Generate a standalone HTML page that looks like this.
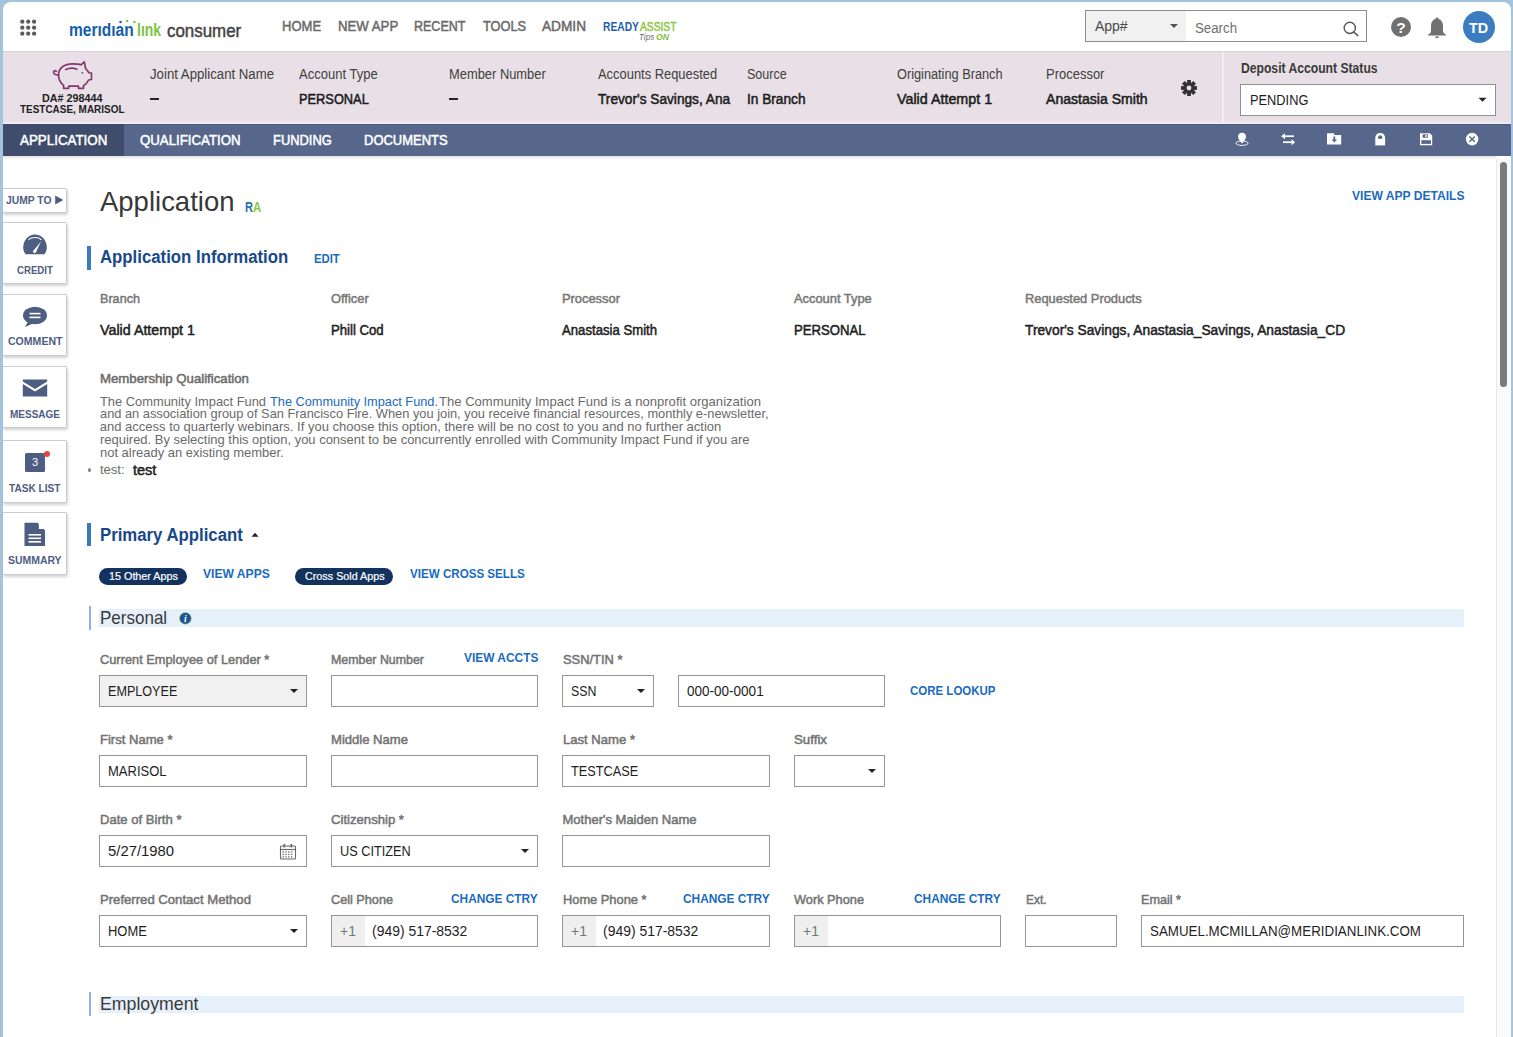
<!DOCTYPE html>
<html><head><meta charset="utf-8"><title>MeridianLink Consumer</title>
<style>
html,body{margin:0;padding:0;}
body{width:1513px;height:1037px;overflow:hidden;position:relative;background:#a3c4dc;font-family:"Liberation Sans",sans-serif;}
.t{position:absolute;line-height:1;white-space:nowrap;transform-origin:0 0;}
.b{position:absolute;}
</style></head><body>
<div class="b" style="left:3px;top:2px;width:1508px;height:1040px;background:#fff;border-radius:8px 8px 0 0;"></div>
<div class="b" style="left:3px;top:51px;width:1508px;height:1px;background:#d9d3d7;"></div>
<svg class="b" style="left:0px;top:0px;" width="45" height="45" viewBox="0 0 45 45"><circle cx="22.3" cy="21.7" r="2.15" fill="#5c5c5c"/><circle cx="22.3" cy="27.7" r="2.15" fill="#5c5c5c"/><circle cx="22.3" cy="33.7" r="2.15" fill="#5c5c5c"/><circle cx="28.2" cy="21.7" r="2.15" fill="#5c5c5c"/><circle cx="28.2" cy="27.7" r="2.15" fill="#5c5c5c"/><circle cx="28.2" cy="33.7" r="2.15" fill="#5c5c5c"/><circle cx="34.1" cy="21.7" r="2.15" fill="#5c5c5c"/><circle cx="34.1" cy="27.7" r="2.15" fill="#5c5c5c"/><circle cx="34.1" cy="33.7" r="2.15" fill="#5c5c5c"/></svg>
<div class="t " style="left:69.3px;top:20.56px;font-size:18px;color:#1560a8;font-weight:bold;transform:scaleX(0.8623);">merıdıan</div>
<div class="t " style="left:136.7px;top:20.56px;font-size:18px;color:#7dc243;font-weight:bold;transform:scaleX(0.7770);">lınk</div>
<svg class="b" style="left:115px;top:17px;" width="25" height="8" viewBox="0 0 25 8"><circle cx="5.5" cy="4.9" r="1.25" fill="#1560a8"/><circle cx="12.1" cy="3.9" r="1.25" fill="#7dc243"/><circle cx="19.4" cy="5.1" r="1.25" fill="#7dc243"/></svg>
<div class="t " style="left:166.8px;top:20.52px;font-size:19px;color:#444;-webkit-text-stroke:0.5px #444;transform:scaleX(0.8896);">consumer</div>
<div class="t " style="left:281.7px;top:18.95px;font-size:14px;color:#6b6b6b;-webkit-text-stroke:0.5px #6b6b6b;transform:scaleX(0.9310);">HOME</div>
<div class="t " style="left:337.5px;top:18.95px;font-size:14px;color:#6b6b6b;-webkit-text-stroke:0.5px #6b6b6b;transform:scaleX(0.9447);">NEW APP</div>
<div class="t " style="left:414.4px;top:18.95px;font-size:14px;color:#6b6b6b;-webkit-text-stroke:0.5px #6b6b6b;transform:scaleX(0.8929);">RECENT</div>
<div class="t " style="left:482.5px;top:18.95px;font-size:14px;color:#6b6b6b;-webkit-text-stroke:0.5px #6b6b6b;transform:scaleX(0.9131);">TOOLS</div>
<div class="t " style="left:542.0px;top:18.95px;font-size:14px;color:#6b6b6b;-webkit-text-stroke:0.5px #6b6b6b;transform:scaleX(0.9754);">ADMIN</div>
<div class="t " style="left:603.0px;top:20.62px;font-size:12.5px;color:#1f5fa8;font-weight:bold;transform:scaleX(0.8223);">READY</div>
<div class="t " style="left:639.5px;top:20.62px;font-size:12.5px;color:#8cc63f;-webkit-text-stroke:0.5px #8cc63f;transform:scaleX(0.8205);font-weight:normal;">ASSIST</div>
<div class="t " style="left:639.4px;top:32.80px;font-size:8.5px;color:#666;transform:scaleX(0.9524);font-style:italic;">Tips</div>
<div class="t " style="left:655.5px;top:32.80px;font-size:8.5px;color:#7cc242;font-weight:bold;transform:scaleX(1.0196);font-style:italic;">ON</div>
<div class="b" style="left:1085px;top:10px;width:282px;height:32px;box-sizing:border-box;border:1px solid #8d8d8d;background:#fff;"></div>
<div class="b" style="left:1086px;top:11px;width:100px;height:30px;background:#f1f1f1;"></div>
<div class="t " style="left:1094.9px;top:18.95px;font-size:14px;color:#4a4a4a;">App#</div>
<svg class="b" style="left:1168px;top:22px;" width="12" height="8" viewBox="0 0 12 8"><path d="M2 2 L10 2 L6 6 Z" fill="#555"/></svg>
<div class="t " style="left:1194.6px;top:20.95px;font-size:14px;color:#6f6f6f;transform:scaleX(0.9471);">Search</div>
<svg class="b" style="left:1342px;top:20px;" width="20" height="18" viewBox="0 0 20 18"><circle cx="7.8" cy="7.9" r="5.6" fill="none" stroke="#555" stroke-width="1.4"/><path d="M11.8 12 L15.8 15.6" stroke="#555" stroke-width="1.5" stroke-linecap="round"/></svg>
<svg class="b" style="left:1390px;top:16px;" width="22" height="22" viewBox="0 0 22 22"><circle cx="11" cy="11" r="10" fill="#717171"/><text x="11" y="16.6" text-anchor="middle" font-family="Liberation Sans" font-weight="bold" font-size="15.5" fill="#fff">?</text></svg>
<svg class="b" style="left:1426px;top:15px;" width="22" height="24" viewBox="0 0 22 24"><path d="M11 2.5 C11.8 2.5 12.3 3 12.3 3.7 C15.5 4.7 17 7.5 17 11 L17 16 C17 17.5 18.5 19 20 19.8 L20 20.5 L2 20.5 L2 19.8 C3.5 19 5 17.5 5 16 L5 11 C5 7.5 6.5 4.7 9.7 3.7 C9.7 3 10.2 2.5 11 2.5 Z" fill="#717171"/><path d="M9 21.5 L13 21.5 C13 22.8 12 23.2 11 23.2 C10 23.2 9 22.8 9 21.5 Z" fill="#717171"/></svg>
<svg class="b" style="left:1462px;top:10px;" width="34" height="34" viewBox="0 0 34 34"><circle cx="17" cy="17" r="16" fill="#3b7dc0"/></svg>
<div class="t " style="left:1469.4px;top:19.78px;font-size:15.5px;color:#fff;font-weight:bold;transform:scaleX(0.9295);">TD</div>
<div class="b" style="left:3px;top:52px;width:1508px;height:72px;background:#e8e0e6;"></div>
<div class="b" style="left:1222px;top:52px;width:2px;height:72px;background:#f2eef1;"></div>
<svg class="b" style="left:0px;top:0px;" width="100" height="100" viewBox="0 0 100 100"><g fill="none" stroke="#82396f" stroke-width="1.7" stroke-linejoin="round" stroke-linecap="round"><path d="M63.6,88.3 L63.6,85.3 C60,82.5 58.5,79 58.5,75 C58.5,68 64.5,63.8 72.5,63.8 C76,63.8 79,64 81,64.8 L84.3,61.8 L85.6,68.5 C87,70 88.2,71.5 89,72.8 L91.5,73 L91.5,79.5 L88.6,80 C87.5,82.5 85.5,84.5 83.5,85.8 L83.5,88.3 L78.5,88.3 L78.5,86.2 L68.7,86.2 L68.7,88.3 Z"/><path d="M65.8,69.6 C69.5,67.7 73.5,67.7 76.8,69.2"/><path d="M58.6,74.6 C56.5,75.2 53.8,74.5 53.6,72.3 C53.5,70.6 55.4,70.2 56.2,71.3"/></g><circle cx="82.4" cy="72.8" r="0.9" fill="#82396f"/></svg>
<div class="t " style="left:41.9px;top:93.94px;font-size:10px;color:#222;font-weight:bold;transform:scaleX(1.0756);">DA# 298444</div>
<div class="t " style="left:20.1px;top:104.94px;font-size:10px;color:#222;font-weight:bold;transform:scaleX(0.9951);">TESTCASE, MARISOL</div>
<div class="t " style="left:149.5px;top:67.35px;font-size:14px;color:#404040;transform:scaleX(0.9431);">Joint Applicant Name</div>
<div class="b" style="left:149.5px;top:98px;width:9.5px;height:2.4px;background:#222;"></div>
<div class="t " style="left:299.0px;top:67.35px;font-size:14px;color:#404040;transform:scaleX(0.9300);">Account Type</div>
<div class="t " style="left:299.0px;top:92.15px;font-size:14px;color:#1c1c1c;-webkit-text-stroke:0.5px #1c1c1c;transform:scaleX(0.9152);">PERSONAL</div>
<div class="t " style="left:448.5px;top:67.35px;font-size:14px;color:#404040;transform:scaleX(0.9212);">Member Number</div>
<div class="b" style="left:448.5px;top:98px;width:9.5px;height:2.4px;background:#222;"></div>
<div class="t " style="left:597.5px;top:67.35px;font-size:14px;color:#404040;transform:scaleX(0.9221);">Accounts Requested</div>
<div class="t " style="left:597.5px;top:92.15px;font-size:14px;color:#1c1c1c;-webkit-text-stroke:0.5px #1c1c1c;transform:scaleX(0.9772);">Trevor's Savings, Ana</div>
<div class="t " style="left:747.1px;top:67.35px;font-size:14px;color:#404040;transform:scaleX(0.8953);">Source</div>
<div class="t " style="left:747.1px;top:92.15px;font-size:14px;color:#1c1c1c;-webkit-text-stroke:0.5px #1c1c1c;transform:scaleX(0.9765);">In Branch</div>
<div class="t " style="left:896.8px;top:67.35px;font-size:14px;color:#404040;transform:scaleX(0.9102);">Originating Branch</div>
<div class="t " style="left:896.8px;top:92.15px;font-size:14px;color:#1c1c1c;-webkit-text-stroke:0.5px #1c1c1c;transform:scaleX(1.0212);">Valid Attempt 1</div>
<div class="t " style="left:1046.0px;top:67.35px;font-size:14px;color:#404040;transform:scaleX(0.9270);">Processor</div>
<div class="t " style="left:1046.0px;top:92.15px;font-size:14px;color:#1c1c1c;-webkit-text-stroke:0.5px #1c1c1c;transform:scaleX(1.0045);">Anastasia Smith</div>
<svg class="b" style="left:1181px;top:80px;" width="16" height="16" viewBox="0 0 16 16"><g transform="translate(8,8)" fill="#333"><rect x="-1.9" y="-8" width="3.8" height="4.5" transform="rotate(0)"/><rect x="-1.9" y="-8" width="3.8" height="4.5" transform="rotate(45)"/><rect x="-1.9" y="-8" width="3.8" height="4.5" transform="rotate(90)"/><rect x="-1.9" y="-8" width="3.8" height="4.5" transform="rotate(135)"/><rect x="-1.9" y="-8" width="3.8" height="4.5" transform="rotate(180)"/><rect x="-1.9" y="-8" width="3.8" height="4.5" transform="rotate(225)"/><rect x="-1.9" y="-8" width="3.8" height="4.5" transform="rotate(270)"/><rect x="-1.9" y="-8" width="3.8" height="4.5" transform="rotate(315)"/><circle r="5.8"/></g><circle cx="8" cy="8" r="2.4" fill="#e8e0e6"/></svg>
<div class="t " style="left:1240.5px;top:61.05px;font-size:14px;color:#3a3a3a;font-weight:bold;transform:scaleX(0.8677);">Deposit Account Status</div>
<div class="b" style="left:1240px;top:84px;width:256px;height:32px;box-sizing:border-box;border:1px solid #8f8f8f;background:#fff;"></div>
<div class="t " style="left:1249.8px;top:92.95px;font-size:14px;color:#1c1c1c;transform:scaleX(0.9154);">PENDING</div>
<svg class="b" style="left:1477px;top:96px;" width="12" height="8" viewBox="0 0 12 8"><path d="M1.5 1.8 L9.5 1.8 L5.5 5.8 Z" fill="#222"/></svg>
<div class="b" style="left:3px;top:122px;width:1508px;height:2px;background:#f0ecef;"></div>
<div class="b" style="left:3px;top:124px;width:1508px;height:32px;background:#56678b;border-top:1px solid #4d5d7f;box-sizing:border-box;"></div>
<div class="b" style="left:3px;top:124px;width:121px;height:32px;background:#3f4c6c;"></div>
<div class="t " style="left:19.6px;top:132.55px;font-size:14px;color:#fff;-webkit-text-stroke:0.5px #fff;transform:scaleX(0.9545);">APPLICATION</div>
<div class="t " style="left:139.7px;top:132.55px;font-size:14px;color:#fff;-webkit-text-stroke:0.5px #fff;transform:scaleX(0.9453);">QUALIFICATION</div>
<div class="t " style="left:272.9px;top:132.55px;font-size:14px;color:#fff;-webkit-text-stroke:0.5px #fff;transform:scaleX(0.9221);">FUNDING</div>
<div class="t " style="left:363.8px;top:132.55px;font-size:14px;color:#fff;-webkit-text-stroke:0.5px #fff;transform:scaleX(0.9277);">DOCUMENTS</div>
<div class="b" style="left:3px;top:156px;width:1493px;height:4px;background:linear-gradient(#e2e2e2,#fff);"></div>
<svg class="b" style="left:1234px;top:130px;" width="17" height="18" viewBox="0 0 17 18"><path d="M8 2.7 C10.3 2.7 12 4.4 12 6.6 C12 9.2 9.5 11.6 8 13.6 C6.5 11.6 4 9.2 4 6.6 C4 4.4 5.7 2.7 8 2.7 Z" fill="#fff"/><ellipse cx="8" cy="13.2" rx="6.1" ry="2.2" fill="none" stroke="#fff" stroke-width="0.9"/></svg>
<svg class="b" style="left:1280px;top:131px;" width="17" height="15" viewBox="0 0 17 15"><g stroke="#fff" stroke-width="1.7" fill="none"><path d="M4 5.2 L14 5.2"/><path d="M3 11.2 L13 11.2"/></g><path d="M1.2 5.2 L5 2.2 L5 8.2 Z" fill="#fff"/><path d="M15.2 11.2 L11.5 8.2 L11.5 14.2 Z" fill="#fff"/></svg>
<svg class="b" style="left:1326px;top:132px;" width="17" height="14" viewBox="0 0 17 14"><path d="M1 1.2 L8.2 1.2 L8.2 3.1 L15.2 3.1 L15.2 12.6 L1 12.6 Z" fill="#fff"/><path d="M8.3 4.5 L8.3 8.5" stroke="#56678b" stroke-width="1.8"/><path d="M5.6 7.6 L8.3 10.6 L11 7.6 Z" fill="#56678b"/></svg>
<svg class="b" style="left:1373px;top:131px;" width="15" height="16" viewBox="0 0 15 16"><path d="M2.3 8.5 L2.3 7 C2.3 3.8 4.3 1.9 7.2 1.9 C10.1 1.9 12.1 3.8 12.1 7 L12.1 8.5 Z" fill="#fff"/><path d="M5 7.8 L5 6.8 C5 5.2 5.9 4.3 7.2 4.3 C8.5 4.3 9.4 5.2 9.4 6.8 L9.4 7.8 Z" fill="#56678b"/><rect x="2.3" y="8" width="9.8" height="6.4" fill="#fff"/></svg>
<svg class="b" style="left:1418px;top:131px;" width="16" height="16" viewBox="0 0 16 16"><path d="M2 2.2 L11.8 2.2 L14.2 4.6 L14.2 14.2 L2 14.2 Z" fill="#fff"/><rect x="4.6" y="3.3" width="5.3" height="3.4" fill="#56678b"/><rect x="7.4" y="3.7" width="1.4" height="2.4" fill="#fff"/><rect x="3.3" y="9.2" width="9.6" height="3.7" fill="#56678b"/></svg>
<svg class="b" style="left:1464px;top:131px;" width="16" height="16" viewBox="0 0 16 16"><circle cx="8.1" cy="8.1" r="6.3" fill="#fff"/><path d="M5.4 5.4 L10.8 10.8 M10.8 5.4 L5.4 10.8" stroke="#56678b" stroke-width="1.4"/></svg>
<div class="b" style="left:1496px;top:159px;width:15px;height:900px;background:#fafafa;border-left:1px solid #e8e8e8;box-sizing:border-box;"></div>
<div class="b" style="left:1500px;top:162px;width:7px;height:225px;background:#7b7b7b;border-radius:4px;"></div>
<div class="b" style="left:3px;top:188px;width:64px;height:25px;box-sizing:border-box;background:#fff;border:1px solid #cbcbcb;border-left:none;border-radius:0 2px 2px 0;box-shadow:1px 2px 3px rgba(0,0,0,0.18);"></div>
<div class="t " style="left:5.6px;top:194.69px;font-size:11px;color:#4e5d82;font-weight:bold;transform:scaleX(0.9381);">JUMP TO</div>
<svg class="b" style="left:54px;top:195px;" width="10" height="10" viewBox="0 0 10 10"><path d="M1.2 0.6 L9.3 5 L1.2 9.4 Z" fill="#4e5d82"/></svg>
<div class="b" style="left:3px;top:222px;width:64px;height:62px;box-sizing:border-box;background:#fff;border:1px solid #cbcbcb;border-left:none;border-radius:0 2px 2px 0;box-shadow:1px 2px 3px rgba(0,0,0,0.18);"></div>
<svg class="b" style="left:22px;top:233px;" width="26" height="22" viewBox="0 0 26 22"><path d="M3.6 21.3 C2 19.4 1.2 17 1.2 14.5 C1.2 7.5 6.4 1.6 13 1.6 C19.6 1.6 24.8 7.5 24.8 14.5 C24.8 17 24 19.4 22.4 21.3 Z" fill="#4e5d82"/><path d="M6.5 6.8 C9.5 3.8 16.5 3.8 19.5 6.8" stroke="#fff" stroke-width="1.1" fill="none"/><path d="M11.4 17.8 L19 8.6 L14 19 Z" fill="#fff"/><circle cx="12.6" cy="18.4" r="1.5" fill="#fff"/></svg>
<div class="t " style="left:16.7px;top:264.79px;font-size:11px;color:#4e5d82;font-weight:bold;transform:scaleX(0.8769);">CREDIT</div>
<div class="b" style="left:3px;top:294px;width:64px;height:62px;box-sizing:border-box;background:#fff;border:1px solid #cbcbcb;border-left:none;border-radius:0 2px 2px 0;box-shadow:1px 2px 3px rgba(0,0,0,0.18);"></div>
<svg class="b" style="left:22px;top:306px;" width="26" height="22" viewBox="0 0 26 22"><ellipse cx="13" cy="9.5" rx="12" ry="8.8" fill="#4e5d82"/><path d="M6 15.5 L3 21 L11 17.5 Z" fill="#4e5d82"/><rect x="7.5" y="6.8" width="11" height="1.6" fill="#fff"/><rect x="7.5" y="10.6" width="11" height="1.6" fill="#fff"/></svg>
<div class="t " style="left:7.6px;top:336.49px;font-size:11px;color:#4e5d82;font-weight:bold;transform:scaleX(0.9593);">COMMENT</div>
<div class="b" style="left:3px;top:366px;width:64px;height:62px;box-sizing:border-box;background:#fff;border:1px solid #cbcbcb;border-left:none;border-radius:0 2px 2px 0;box-shadow:1px 2px 3px rgba(0,0,0,0.18);"></div>
<svg class="b" style="left:22px;top:379px;" width="26" height="19" viewBox="0 0 26 19"><path d="M0.8 0.5 L25.2 0.5 L25.2 2.5 L13 10 L0.8 2.5 Z" fill="#4e5d82"/><path d="M0.8 5 L13 12.5 L25.2 5 L25.2 17.5 L0.8 17.5 Z" fill="#4e5d82"/></svg>
<div class="t " style="left:10.0px;top:408.69px;font-size:11px;color:#4e5d82;font-weight:bold;transform:scaleX(0.9086);">MESSAGE</div>
<div class="b" style="left:3px;top:440px;width:64px;height:63px;box-sizing:border-box;background:#fff;border:1px solid #cbcbcb;border-left:none;border-radius:0 2px 2px 0;box-shadow:1px 2px 3px rgba(0,0,0,0.18);"></div>
<div class="b" style="left:24.8px;top:452.7px;width:20px;height:19.7px;background:#4e5d82;border-radius:1.5px;"></div>
<div class="t " style="left:31.6px;top:457.49px;font-size:11px;color:#fff;transform:scaleX(1.0122);">3</div>
<div class="b" style="left:43.5px;top:450.6px;width:6px;height:6px;background:#e0463a;border-radius:50%;"></div>
<div class="t " style="left:9.2px;top:482.99px;font-size:11px;color:#4e5d82;font-weight:bold;transform:scaleX(0.9191);">TASK LIST</div>
<div class="b" style="left:3px;top:512px;width:64px;height:63px;box-sizing:border-box;background:#fff;border:1px solid #cbcbcb;border-left:none;border-radius:0 2px 2px 0;box-shadow:1px 2px 3px rgba(0,0,0,0.18);"></div>
<svg class="b" style="left:24px;top:522px;" width="22" height="25" viewBox="0 0 22 25"><path d="M0.5 0.8 L13.5 0.8 L21 8.3 L21 24 L0.5 24 Z" fill="#4e5d82"/><path d="M14.8 0.8 L21 7 L14.8 7 Z" fill="#fff"/><rect x="4.5" y="12" width="12.5" height="1.6" fill="#fff"/><rect x="4.5" y="15.5" width="12.5" height="1.6" fill="#fff"/><rect x="4.5" y="19" width="12.5" height="1.6" fill="#fff"/></svg>
<div class="t " style="left:8.0px;top:555.19px;font-size:11px;color:#4e5d82;font-weight:bold;transform:scaleX(0.9485);">SUMMARY</div>
<div class="t " style="left:99.9px;top:188.10px;font-size:28px;color:#383838;transform:scaleX(0.9818);">Application</div>
<div class="t " style="left:244.6px;top:199.75px;font-size:14px;color:#2a6fb0;font-weight:bold;transform:scaleX(0.7913);">R</div>
<div class="t " style="left:253.0px;top:199.75px;font-size:14px;color:#8dc63f;font-weight:bold;transform:scaleX(0.8210);">A</div>
<div class="t " style="left:1351.5px;top:189.00px;font-size:13px;color:#1a6bbf;font-weight:bold;transform:scaleX(0.9290);">VIEW APP DETAILS</div>
<div class="b" style="left:87px;top:245.5px;width:4px;height:24px;background:#3a78c0;"></div>
<div class="t " style="left:99.9px;top:247.76px;font-size:18px;color:#17498a;font-weight:bold;transform:scaleX(0.9320);">Application Information</div>
<div class="t " style="left:313.7px;top:253.22px;font-size:12.5px;color:#1a6bbf;font-weight:bold;transform:scaleX(0.9058);">EDIT</div>
<div class="t " style="left:99.8px;top:292.00px;font-size:13px;color:#777;-webkit-text-stroke:0.5px #777;transform:scaleX(0.9708);">Branch</div>
<div class="t " style="left:99.8px;top:322.95px;font-size:14px;color:#222;-webkit-text-stroke:0.5px #222;transform:scaleX(1.0201);">Valid Attempt 1</div>
<div class="t " style="left:331.4px;top:292.00px;font-size:13px;color:#777;-webkit-text-stroke:0.5px #777;transform:scaleX(0.9900);">Officer</div>
<div class="t " style="left:331.4px;top:322.95px;font-size:14px;color:#222;-webkit-text-stroke:0.5px #222;transform:scaleX(0.9400);">Phill Cod</div>
<div class="t " style="left:562.0px;top:292.00px;font-size:13px;color:#777;-webkit-text-stroke:0.5px #777;transform:scaleX(0.9900);">Processor</div>
<div class="t " style="left:562.0px;top:322.95px;font-size:14px;color:#222;-webkit-text-stroke:0.5px #222;transform:scaleX(0.9400);">Anastasia Smith</div>
<div class="t " style="left:794.0px;top:292.00px;font-size:13px;color:#777;-webkit-text-stroke:0.5px #777;transform:scaleX(0.9900);">Account Type</div>
<div class="t " style="left:794.0px;top:322.95px;font-size:14px;color:#222;-webkit-text-stroke:0.5px #222;transform:scaleX(0.9400);">PERSONAL</div>
<div class="t " style="left:1025.0px;top:292.00px;font-size:13px;color:#777;-webkit-text-stroke:0.5px #777;transform:scaleX(0.9900);">Requested Products</div>
<div class="t " style="left:1025.0px;top:322.95px;font-size:14px;color:#222;-webkit-text-stroke:0.5px #222;transform:scaleX(0.9822);">Trevor's Savings, Anastasia_Savings, Anastasia_CD</div>
<div class="t " style="left:99.8px;top:371.90px;font-size:13px;color:#6b6b6b;-webkit-text-stroke:0.5px #6b6b6b;transform:scaleX(1.0155);">Membership Qualification</div>
<div class="t " style="left:99.8px;top:394.50px;font-size:13px;color:#6a6a6a;transform:scaleX(0.9902);">The Community Impact Fund</div>
<div class="t " style="left:269.5px;top:394.50px;font-size:13px;color:#1a6bbf;transform:scaleX(0.9810);">The Community Impact Fund.</div>
<div class="t " style="left:439.0px;top:394.50px;font-size:13px;color:#6a6a6a;transform:scaleX(1.0057);">The Community Impact Fund is a nonprofit organization</div>
<div class="t " style="left:99.8px;top:407.00px;font-size:13px;color:#6a6a6a;transform:scaleX(0.9864);">and an association group of San Francisco Fire. When you join, you receive financial resources, monthly e-newsletter,</div>
<div class="t " style="left:99.8px;top:419.95px;font-size:13px;color:#6a6a6a;">and access to quarterly webinars. If you choose this option, there will be no cost to you and no further action</div>
<div class="t " style="left:99.8px;top:432.90px;font-size:13px;color:#6a6a6a;transform:scaleX(0.9977);">required. By selecting this option, you consent to be concurrently enrolled with Community Impact Fund if you are</div>
<div class="t " style="left:99.8px;top:445.85px;font-size:13px;color:#6a6a6a;transform:scaleX(0.9967);">not already an existing member.</div>
<div class="b" style="left:87.5px;top:468px;width:3.5px;height:3.5px;background:#888;border-radius:50%;"></div>
<div class="t " style="left:99.8px;top:463.00px;font-size:13px;color:#6a6a6a;transform:scaleX(0.9975);">test:</div>
<div class="t " style="left:132.6px;top:462.65px;font-size:14px;color:#222;-webkit-text-stroke:0.5px #222;transform:scaleX(1.0371);">test</div>
<div class="b" style="left:87px;top:522.5px;width:4px;height:23px;background:#3a78c0;"></div>
<div class="t " style="left:99.6px;top:525.56px;font-size:18px;color:#17498a;font-weight:bold;transform:scaleX(0.9310);">Primary Applicant</div>
<svg class="b" style="left:250px;top:531px;" width="10" height="7" viewBox="0 0 10 7"><path d="M1.5 5.8 L5 1.8 L8.5 5.8 Z" fill="#222"/></svg>
<div class="b" style="left:99.3px;top:568px;width:87.50000000000001px;height:16.5px;background:#13325e;border-radius:9px;"></div>
<div class="t " style="left:108.6px;top:571.29px;font-size:11px;color:#fff;transform:scaleX(0.9802);-webkit-text-stroke:0.2px #fff;">15 Other Apps</div>
<div class="t " style="left:203.0px;top:568.22px;font-size:12.5px;color:#1a6bbf;font-weight:bold;transform:scaleX(0.9679);">VIEW APPS</div>
<div class="b" style="left:295.3px;top:568px;width:98.19999999999999px;height:16.5px;background:#13325e;border-radius:9px;"></div>
<div class="t " style="left:304.6px;top:571.29px;font-size:11px;color:#fff;transform:scaleX(0.9796);-webkit-text-stroke:0.2px #fff;">Cross Sold Apps</div>
<div class="t " style="left:410.2px;top:568.22px;font-size:12.5px;color:#1a6bbf;font-weight:bold;transform:scaleX(0.9283);">VIEW CROSS SELLS</div>
<div class="b" style="left:89px;top:606px;width:2px;height:24px;background:#8db4dc;"></div>
<div class="b" style="left:99px;top:608.5px;width:1365px;height:18.5px;background:#e6f0fa;"></div>
<div class="t " style="left:100.2px;top:608.74px;font-size:18.5px;color:#3a3a3a;transform:scaleX(0.9194);">Personal</div>
<svg class="b" style="left:179px;top:612px;" width="13" height="13" viewBox="0 0 13 13"><circle cx="6.4" cy="6.3" r="5.9" fill="#1a5396" stroke="#b8d36a" stroke-width="0.7"/><text x="6.4" y="10.2" text-anchor="middle" font-family="Liberation Serif" font-style="italic" font-weight="bold" font-size="9.5" fill="#fff">i</text></svg>
<div class="b" style="left:89px;top:992px;width:2px;height:24px;background:#8db4dc;"></div>
<div class="b" style="left:99px;top:995.5px;width:1365px;height:17.5px;background:#e6f0fa;"></div>
<div class="t " style="left:100.2px;top:994.74px;font-size:18.5px;color:#3a3a3a;transform:scaleX(0.9574);">Employment</div>
<div class="t " style="left:99.9px;top:653.00px;font-size:13px;color:#737373;-webkit-text-stroke:0.5px #737373;transform:scaleX(0.9847);">Current Employee of Lender *</div>
<div class="b" style="left:99px;top:675px;width:208px;height:32px;box-sizing:border-box;border:1px solid #959595;background:#f1f1f1;"></div>
<div class="t " style="left:108.0px;top:683.75px;font-size:14px;color:#1e1e1e;transform:scaleX(0.8995);">EMPLOYEE</div>
<svg class="b" style="left:287.7px;top:687px;" width="12" height="8" viewBox="0 0 12 8"><path d="M2 2 L10 2 L6 6 Z" fill="#222"/></svg>
<div class="t " style="left:331.0px;top:653.00px;font-size:13px;color:#737373;-webkit-text-stroke:0.5px #737373;transform:scaleX(0.9534);">Member Number</div>
<div class="t " style="left:463.8px;top:652.22px;font-size:12.5px;color:#1a6bbf;font-weight:bold;transform:scaleX(0.9535);">VIEW ACCTS</div>
<div class="b" style="left:331px;top:675px;width:207px;height:32px;box-sizing:border-box;border:1px solid #959595;background:#fff;"></div>
<div class="t " style="left:562.5px;top:653.00px;font-size:13px;color:#737373;-webkit-text-stroke:0.5px #737373;transform:scaleX(0.9924);">SSN/TIN *</div>
<div class="b" style="left:562px;top:675px;width:92px;height:32px;box-sizing:border-box;border:1px solid #959595;background:#fff;"></div>
<div class="t " style="left:571.0px;top:683.75px;font-size:14px;color:#1e1e1e;transform:scaleX(0.8820);">SSN</div>
<svg class="b" style="left:634.7px;top:687px;" width="12" height="8" viewBox="0 0 12 8"><path d="M2 2 L10 2 L6 6 Z" fill="#222"/></svg>
<div class="b" style="left:678px;top:675px;width:207px;height:32px;box-sizing:border-box;border:1px solid #959595;background:#fff;"></div>
<div class="t " style="left:687.0px;top:683.75px;font-size:14px;color:#1e1e1e;transform:scaleX(0.9654);">000-00-0001</div>
<div class="t " style="left:909.5px;top:684.92px;font-size:12.5px;color:#1a6bbf;font-weight:bold;transform:scaleX(0.9186);">CORE LOOKUP</div>
<div class="t " style="left:99.9px;top:733.00px;font-size:13px;color:#737373;-webkit-text-stroke:0.5px #737373;transform:scaleX(1.0037);">First Name *</div>
<div class="b" style="left:99px;top:755px;width:208px;height:32px;box-sizing:border-box;border:1px solid #959595;background:#fff;"></div>
<div class="t " style="left:108.0px;top:763.75px;font-size:14px;color:#1e1e1e;transform:scaleX(0.9283);">MARISOL</div>
<div class="t " style="left:331.0px;top:733.00px;font-size:13px;color:#737373;-webkit-text-stroke:0.5px #737373;transform:scaleX(1.0051);">Middle Name</div>
<div class="b" style="left:331px;top:755px;width:207px;height:32px;box-sizing:border-box;border:1px solid #959595;background:#fff;"></div>
<div class="t " style="left:562.5px;top:733.00px;font-size:13px;color:#737373;-webkit-text-stroke:0.5px #737373;transform:scaleX(1.0063);">Last Name *</div>
<div class="b" style="left:562px;top:755px;width:208px;height:32px;box-sizing:border-box;border:1px solid #959595;background:#fff;"></div>
<div class="t " style="left:571.0px;top:763.75px;font-size:14px;color:#1e1e1e;transform:scaleX(0.9091);">TESTCASE</div>
<div class="t " style="left:794.0px;top:733.00px;font-size:13px;color:#737373;-webkit-text-stroke:0.5px #737373;transform:scaleX(1.0223);">Suffix</div>
<div class="b" style="left:794px;top:755px;width:91px;height:32px;box-sizing:border-box;border:1px solid #959595;background:#fff;"></div>
<svg class="b" style="left:865.7px;top:767px;" width="12" height="8" viewBox="0 0 12 8"><path d="M2 2 L10 2 L6 6 Z" fill="#222"/></svg>
<div class="t " style="left:99.9px;top:813.00px;font-size:13px;color:#737373;-webkit-text-stroke:0.5px #737373;transform:scaleX(1.0069);">Date of Birth *</div>
<div class="b" style="left:99px;top:835px;width:208px;height:32px;box-sizing:border-box;border:1px solid #959595;background:#fff;"></div>
<div class="t " style="left:108.0px;top:843.75px;font-size:14px;color:#1e1e1e;transform:scaleX(1.0602);">5/27/1980</div>
<svg class="b" style="left:279px;top:843px;" width="18" height="17" viewBox="0 0 18 17"><g fill="none" stroke="#666" stroke-width="1.1"><rect x="1.5" y="3" width="15" height="13" rx="1"/><path d="M1.5 6.5 L16.5 6.5"/></g><rect x="4.5" y="1" width="1.6" height="3.5" fill="#666"/><rect x="11.5" y="1" width="1.6" height="3.5" fill="#666"/><rect x="3.5" y="8.2" width="1.4" height="1.4" fill="#777"/><rect x="3.5" y="10.7" width="1.4" height="1.4" fill="#777"/><rect x="3.5" y="13.2" width="1.4" height="1.4" fill="#777"/><rect x="6.3" y="8.2" width="1.4" height="1.4" fill="#777"/><rect x="6.3" y="10.7" width="1.4" height="1.4" fill="#777"/><rect x="6.3" y="13.2" width="1.4" height="1.4" fill="#777"/><rect x="9.1" y="8.2" width="1.4" height="1.4" fill="#777"/><rect x="9.1" y="10.7" width="1.4" height="1.4" fill="#777"/><rect x="9.1" y="13.2" width="1.4" height="1.4" fill="#777"/><rect x="11.9" y="8.2" width="1.4" height="1.4" fill="#777"/><rect x="11.9" y="10.7" width="1.4" height="1.4" fill="#777"/><rect x="11.9" y="13.2" width="1.4" height="1.4" fill="#777"/></svg>
<div class="t " style="left:331.0px;top:813.00px;font-size:13px;color:#737373;-webkit-text-stroke:0.5px #737373;transform:scaleX(1.0099);">Citizenship *</div>
<div class="b" style="left:331px;top:835px;width:207px;height:32px;box-sizing:border-box;border:1px solid #959595;background:#fff;"></div>
<div class="t " style="left:340.0px;top:843.75px;font-size:14px;color:#1e1e1e;transform:scaleX(0.9102);">US CITIZEN</div>
<svg class="b" style="left:518.7px;top:847px;" width="12" height="8" viewBox="0 0 12 8"><path d="M2 2 L10 2 L6 6 Z" fill="#222"/></svg>
<div class="t " style="left:562.5px;top:813.00px;font-size:13px;color:#737373;-webkit-text-stroke:0.5px #737373;">Mother's Maiden Name</div>
<div class="b" style="left:562px;top:835px;width:208px;height:32px;box-sizing:border-box;border:1px solid #959595;background:#fff;"></div>
<div class="t " style="left:99.9px;top:893.00px;font-size:13px;color:#737373;-webkit-text-stroke:0.5px #737373;transform:scaleX(1.0093);">Preferred Contact Method</div>
<div class="b" style="left:99px;top:915px;width:208px;height:32px;box-sizing:border-box;border:1px solid #959595;background:#fff;"></div>
<div class="t " style="left:108.0px;top:923.75px;font-size:14px;color:#1e1e1e;transform:scaleX(0.9238);">HOME</div>
<svg class="b" style="left:287.7px;top:927px;" width="12" height="8" viewBox="0 0 12 8"><path d="M2 2 L10 2 L6 6 Z" fill="#222"/></svg>
<div class="t " style="left:331.0px;top:893.00px;font-size:13px;color:#737373;-webkit-text-stroke:0.5px #737373;transform:scaleX(0.9745);">Cell Phone</div>
<div class="t " style="left:451.3px;top:892.82px;font-size:12.5px;color:#1a6bbf;font-weight:bold;transform:scaleX(0.9503);">CHANGE CTRY</div>
<div class="b" style="left:331px;top:915px;width:207px;height:32px;box-sizing:border-box;border:1px solid #959595;background:#fff;"></div>
<div class="b" style="left:332px;top:916px;width:33px;height:30px;background:#efefef;"></div>
<div class="t " style="left:339.8px;top:924.35px;font-size:14px;color:#777;transform:scaleX(1.0029);">+1</div>
<div class="t " style="left:371.7px;top:923.75px;font-size:14px;color:#1e1e1e;transform:scaleX(0.9951);">(949) 517-8532</div>
<div class="t " style="left:562.5px;top:893.00px;font-size:13px;color:#737373;-webkit-text-stroke:0.5px #737373;transform:scaleX(0.9873);">Home Phone *</div>
<div class="t " style="left:682.5px;top:892.82px;font-size:12.5px;color:#1a6bbf;font-weight:bold;transform:scaleX(0.9503);">CHANGE CTRY</div>
<div class="b" style="left:562px;top:915px;width:208px;height:32px;box-sizing:border-box;border:1px solid #959595;background:#fff;"></div>
<div class="b" style="left:563px;top:916px;width:33px;height:30px;background:#efefef;"></div>
<div class="t " style="left:570.8px;top:924.35px;font-size:14px;color:#777;transform:scaleX(1.0029);">+1</div>
<div class="t " style="left:602.7px;top:923.75px;font-size:14px;color:#1e1e1e;transform:scaleX(0.9951);">(949) 517-8532</div>
<div class="t " style="left:794.0px;top:893.00px;font-size:13px;color:#737373;-webkit-text-stroke:0.5px #737373;transform:scaleX(0.9816);">Work Phone</div>
<div class="t " style="left:914.0px;top:892.82px;font-size:12.5px;color:#1a6bbf;font-weight:bold;transform:scaleX(0.9503);">CHANGE CTRY</div>
<div class="b" style="left:794px;top:915px;width:207px;height:32px;box-sizing:border-box;border:1px solid #959595;background:#fff;"></div>
<div class="b" style="left:795px;top:916px;width:33px;height:30px;background:#efefef;"></div>
<div class="t " style="left:802.8px;top:924.35px;font-size:14px;color:#777;transform:scaleX(1.0029);">+1</div>
<div class="t " style="left:1025.5px;top:893.00px;font-size:13px;color:#737373;-webkit-text-stroke:0.5px #737373;transform:scaleX(0.9156);">Ext.</div>
<div class="b" style="left:1025px;top:915px;width:92px;height:32px;box-sizing:border-box;border:1px solid #959595;background:#fff;"></div>
<div class="t " style="left:1141.0px;top:893.00px;font-size:13px;color:#737373;-webkit-text-stroke:0.5px #737373;transform:scaleX(0.9712);">Email *</div>
<div class="b" style="left:1141px;top:915px;width:323px;height:32px;box-sizing:border-box;border:1px solid #959595;background:#fff;"></div>
<div class="t " style="left:1150.0px;top:923.75px;font-size:14px;color:#1e1e1e;transform:scaleX(0.9534);">SAMUEL.MCMILLAN@MERIDIANLINK.COM</div>
</body></html>
